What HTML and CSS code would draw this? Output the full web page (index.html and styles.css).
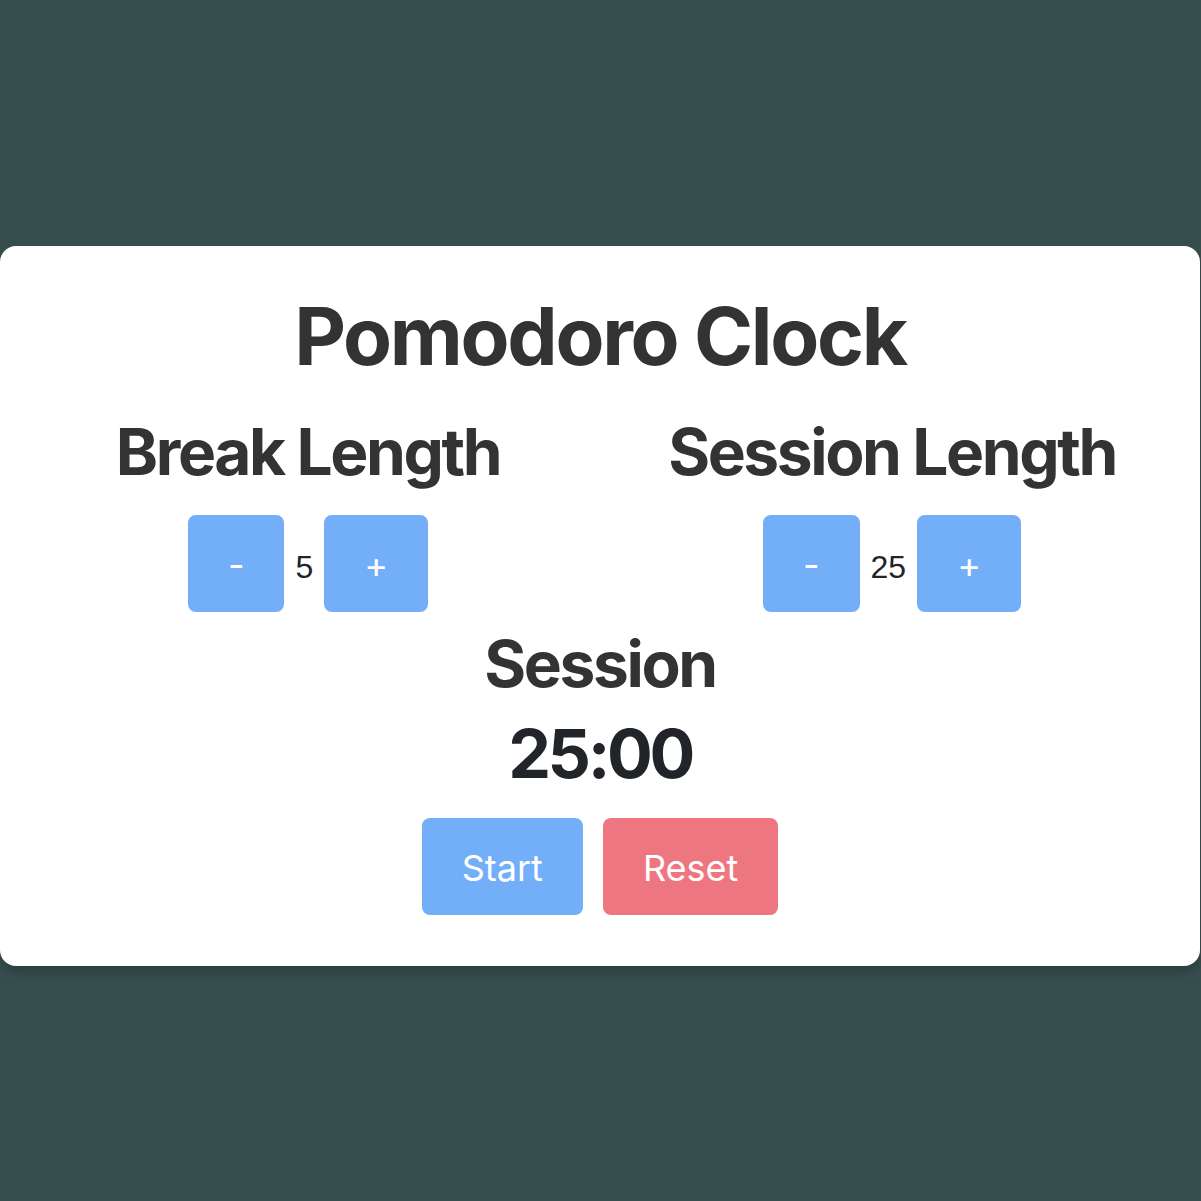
FILE: index.html
```html
<!DOCTYPE html>
<html lang="en">
<head>
<meta charset="utf-8">
<title>Pomodoro Clock</title>
<link rel="stylesheet" href="styles.css">
</head>
<body>
  <main class="card">
    <h1 class="title">Pomodoro Clock</h1>
    <div class="settings">
      <section class="setting">
        <h2 class="setting-label">Break Length</h2>
        <div class="controls">
          <button class="btn btn-blue btn-step">-</button>
          <span class="value">5</span>
          <button class="btn btn-blue btn-step">+</button>
        </div>
      </section>
      <section class="setting">
        <h2 class="setting-label">Session Length</h2>
        <div class="controls">
          <button class="btn btn-blue btn-step">-</button>
          <span class="value">25</span>
          <button class="btn btn-blue btn-step">+</button>
        </div>
      </section>
    </div>
    <h2 class="timer-label">Session</h2>
    <div class="timer">25:00</div>
    <div class="actions">
      <button class="btn btn-blue">Start</button>
      <button class="btn btn-red">Reset</button>
    </div>
  </main>
</body>
</html>
```
FILE: styles.css
```css
* { box-sizing: border-box; }
html, body { margin: 0; padding: 0; }
body {
  background: #374e4f;
  font-family: Inter, "Noto Sans", sans-serif;
  min-height: 1201px;
  padding-top: 246px;
}
.card {
  width: 1200px;
  background: #ffffff;
  border-radius: 16px;
  box-shadow: 0 6px 14px rgba(0, 0, 0, 0.22);
  padding: 42px 16px 51px;
  display: flex;
  flex-direction: column;
  align-items: center;
}
.title {
  margin: 0;
  font-size: 80px;
  line-height: 96px;
  font-weight: 700;
  letter-spacing: -2.3px;
  color: #333333;
  text-align: center;
}
.settings {
  display: grid;
  grid-template-columns: 1fr 1fr;
  width: 100%;
  margin-top: 29px;
}
.setting {
  display: flex;
  flex-direction: column;
  align-items: center;
}
.setting-label, .timer-label {
  margin: 0;
  font-size: 64px;
  line-height: 77px;
  font-weight: 700;
  letter-spacing: -2.4px;
  color: #333333;
}
.controls {
  display: flex;
  align-items: center;
  gap: 11px;
  margin-top: 25px;
}
.value {
  font-family: "Liberation Sans", Arial, sans-serif;
  font-size: 32px;
  line-height: 37px;
  padding-top: 7px;
  color: #212529;
}
.btn {
  border: none;
  border-radius: 8px;
  color: #ffffff;
  font-family: Inter, "Noto Sans", sans-serif;
  font-size: 36px;
  font-weight: 400;
  line-height: 45px;
  padding: 28px 40px 24px;
  cursor: pointer;
}
.btn-blue { background: #73aef8; }
.btn-red { background: #ee7680; }
.timer-label { margin-top: 13px; }
.timer {
  margin-top: 10px;
  font-size: 68px;
  line-height: 82px;
  font-weight: 700;
  letter-spacing: -3.4px;
  color: #212529;
}
.actions {
  display: flex;
  gap: 20px;
  margin-top: 24px;
}
```
